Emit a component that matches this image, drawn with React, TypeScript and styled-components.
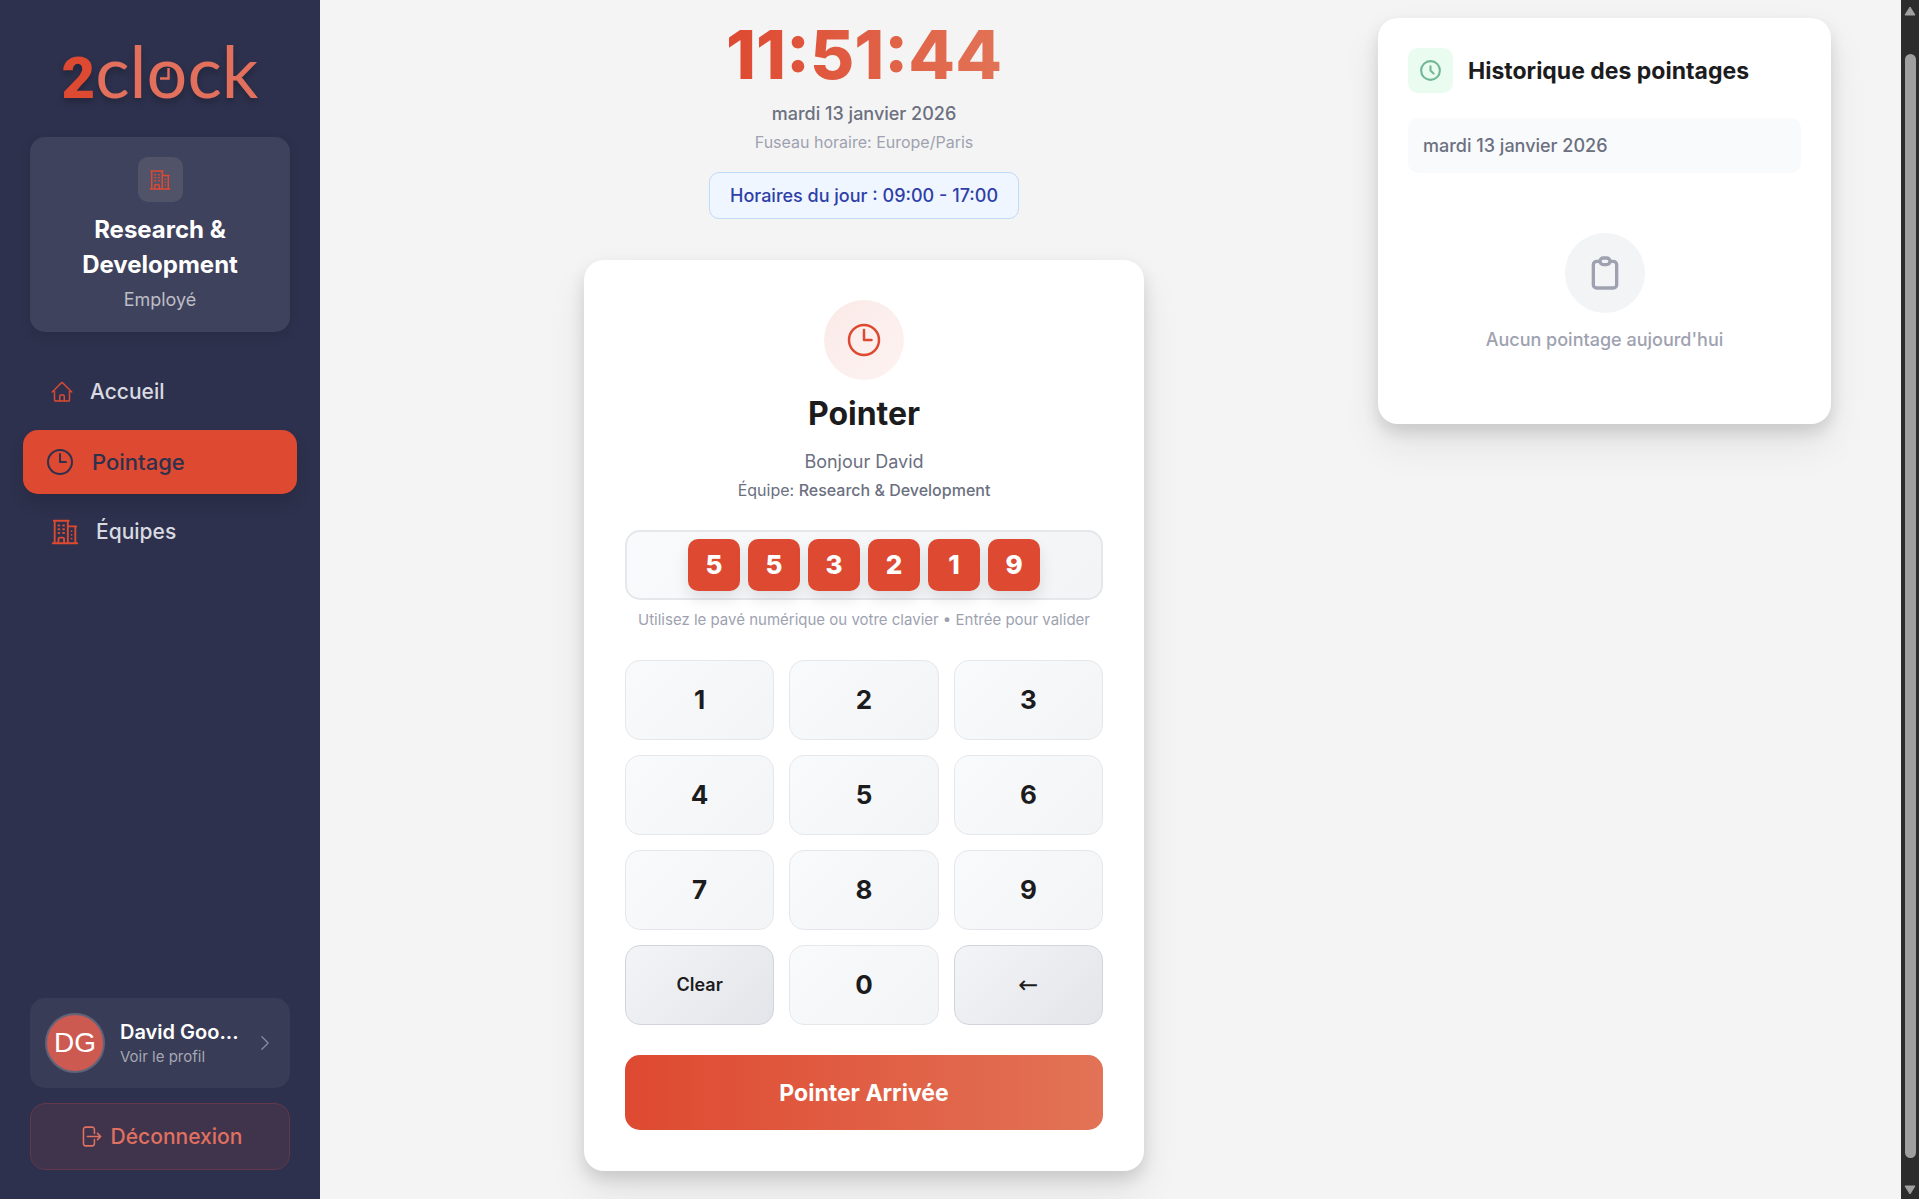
import React, { useEffect, useState } from "react";
import styled, { createGlobalStyle, css } from "styled-components";
import {
  HiOutlineHome,
  HiOutlineClock,
  HiOutlineBuildingOffice2,
  HiOutlineChevronRight,
  HiOutlineArrowRightOnRectangle,
} from "react-icons/hi2";
import { HiOutlineClipboard, HiOutlineClock as HistoryClock } from "react-icons/hi";

const color = {
  navy: "#2d314d",
  accent: "#de4931",
  coral: "#e27356",
  ink: "#1c1c1e",
  slate: "#6b7080",
  muted: "#9ea2b0",
};

const GlobalStyle = createGlobalStyle`
  *, *::before, *::after { box-sizing: border-box; }
  body {
    margin: 0;
    background: #f4f4f4;
    color: ${color.ink};
    font-family: Inter, "Open Sans", sans-serif;
    font-size: 16px;
    line-height: 24px;
  }
  h1, h2, h3, p { margin: 0; }
  button { font: inherit; color: inherit; cursor: pointer; }
  a { text-decoration: none; color: inherit; }
  svg { display: block; flex: none; }
`;

const Shell = styled.div`
  display: grid;
  grid-template-columns: 320px minmax(0, 1fr) 18px;
  height: 100vh;
  overflow: hidden;
`;

/* ---------- sidebar ---------- */

const Sidebar = styled.aside`
  display: flex;
  flex-direction: column;
  padding: 34px 30px 29px;
  background: ${color.navy};
  color: #fff;
`;

const Logo = styled.a`
  display: flex;
  justify-content: center;
  align-items: baseline;
  height: 72px;
  margin-bottom: 31px;
  font-family: Lato, sans-serif;
  font-size: 72px;
  font-weight: 400;
  line-height: 72px;
  color: #e3705c;
  text-shadow: 0 4px 6px rgba(0, 0, 0, 0.25);
`;

const LogoDigit = styled.span`
  font-family: Roboto, sans-serif;
  font-size: 58px;
  font-weight: 900;
  color: ${color.accent};
`;

const LogoDial = styled.span`
  position: relative;
`;

const LogoHands = styled.svg`
  position: absolute;
  left: 50%;
  bottom: 26px;
  margin-left: -7px;
`;

const TeamCard = styled.section`
  display: flex;
  flex-direction: column;
  align-items: center;
  padding: 20px 20px 19px;
  border-radius: 15px;
  background: #3f425c;
  box-shadow: 0 4px 12px rgba(0, 0, 0, 0.1);
  text-align: center;
`;

const TeamBadge = styled.span`
  display: grid;
  place-items: center;
  width: 45px;
  height: 45px;
  margin-bottom: 10px;
  border-radius: 10px;
  background: #515369;
  color: ${color.accent};
`;

const TeamName = styled.h2`
  font-size: 24px;
  font-weight: 700;
  line-height: 35px;
`;

const TeamRole = styled.p`
  margin-top: 4px;
  font-size: 18px;
  line-height: 27px;
  color: #bcbdc6;
`;

const Nav = styled.nav`
  display: flex;
  flex-direction: column;
  gap: 6px;
  margin: 28px -7px 0;
`;

const NavLink = styled.a<{ $active?: boolean }>`
  display: flex;
  align-items: center;
  gap: 16px;
  height: 64px;
  padding: 0 27px;
  border-radius: 15px;
  font-size: 21px;
  font-weight: 500;
  color: #d9dae1;

  svg { color: ${color.accent}; }

  ${({ $active }) =>
    $active &&
    css`
      padding: 0 21px;
      font-size: 22px;
      background: ${color.accent};
      color: ${color.navy};
      box-shadow: 0 10px 15px rgba(0, 0, 0, 0.12);
      svg { color: ${color.navy}; }
    `}
`;

const Account = styled.div`
  display: flex;
  flex-direction: column;
  gap: 15px;
  margin-top: auto;
`;

const Profile = styled.a`
  display: flex;
  align-items: center;
  gap: 15px;
  height: 90px;
  padding: 15px;
  border-radius: 15px;
  background: #383c56;
  > svg { color: #8a8c9c; }
`;

const Avatar = styled.span`
  display: grid;
  place-items: center;
  flex: none;
  width: 60px;
  height: 60px;
  border: 2px solid #60637a;
  border-radius: 50%;
  background: #cd5a50;
  font-family: "Liberation Sans", Arial, sans-serif;
  font-size: 28px;
`;

const ProfileText = styled.span`
  flex: 1;
  min-width: 0;
`;

const ProfileName = styled.span`
  display: block;
  white-space: nowrap;
  font-size: 20px;
  font-weight: 600;
  line-height: 28px;
`;

const ProfileHint = styled.span`
  display: block;
  font-size: 15px;
  line-height: 22px;
  color: #a5a7b3;
`;

const Logout = styled.button`
  display: flex;
  align-items: center;
  justify-content: center;
  gap: 8px;
  height: 67px;
  border: 1px solid #63384c;
  border-radius: 15px;
  background: #40334c;
  color: #e0705f;
  font-size: 21px;
  font-weight: 500;
`;

/* ---------- main ---------- */

const Main = styled.main`
  display: grid;
  grid-template-columns: minmax(0, 1fr) 453px;
  align-items: start;
  padding: 18px 70px 0 30px;
  overflow: hidden;
`;

const Center = styled.div`
  display: flex;
  flex-direction: column;
  align-items: center;
`;

const Time = styled.h1`
  font-size: 68px;
  font-weight: 800;
  line-height: 72px;
  background: linear-gradient(90deg, ${color.accent}, ${color.coral});
  background-clip: text;
  -webkit-background-clip: text;
  color: transparent;
`;

const Today = styled.p`
  margin-top: 12px;
  font-size: 18px;
  font-weight: 500;
  color: ${color.slate};
`;

const Zone = styled.p`
  margin-top: 4px;
  font-size: 16px;
  color: ${color.muted};
`;

const Schedule = styled.p`
  margin-top: 18px;
  padding: 11px 20px;
  border: 1px solid #c0dbf8;
  border-radius: 10px;
  background: #eff6ff;
  color: #2f3fa8;
  font-size: 18px;
  font-weight: 500;
  line-height: 23px;
`;

const Panel = styled.section`
  border-radius: 20px;
  background: #fff;
  box-shadow: 0 20px 40px rgba(0, 0, 0, 0.08), 0 8px 16px rgba(0, 0, 0, 0.12);
`;

const PunchCard = styled(Panel)`
  display: flex;
  flex-direction: column;
  align-items: center;
  width: 560px;
  max-width: 100%;
  margin-top: 41px;
  padding: 40px 41px 41px;
`;

const Disc = styled.span<{ $tone: "accent" | "grey" }>`
  display: grid;
  place-items: center;
  width: 80px;
  height: 80px;
  border-radius: 50%;
  color: ${({ $tone }) => ($tone === "accent" ? color.accent : color.muted)};
  background: ${({ $tone }) =>
    $tone === "accent" ? "linear-gradient(135deg, #faeae8, #fdf3f1)" : "#f3f4f6"};
`;

const PunchTitle = styled.h2`
  margin-top: 14px;
  font-size: 32px;
  font-weight: 700;
  line-height: 40px;
`;

const Greeting = styled.p`
  margin-top: 16px;
  font-size: 18px;
  color: ${color.slate};
`;

const TeamLine = styled.p`
  margin-top: 4px;
  font-size: 16px;
  color: ${color.slate};
  strong { font-weight: 500; }
`;

const PunchForm = styled.form`
  display: flex;
  flex-direction: column;
  align-self: stretch;
  margin-top: 28px;
`;

const Code = styled.output`
  display: flex;
  align-items: center;
  justify-content: center;
  gap: 8px;
  height: 70px;
  border: 2px solid #e5e7eb;
  border-radius: 15px;
  background: linear-gradient(135deg, #f9fafb, #f3f4f6);
`;

const CodeDigit = styled.span`
  display: grid;
  place-items: center;
  width: 52px;
  height: 52px;
  border-radius: 10px;
  background: ${color.accent};
  box-shadow: 0 8px 15px rgba(0, 0, 0, 0.1);
  color: #fff;
  font-size: 26px;
  font-weight: 800;
`;

const Hint = styled.p`
  align-self: center;
  margin-top: 8px;
  font-size: 15px;
  white-space: nowrap;
  color: ${color.muted};
`;

const Keypad = styled.div`
  display: grid;
  grid-template-columns: repeat(3, 1fr);
  gap: 15px;
  margin: 28px 0 30px;
`;

const Key = styled.button<{ $action?: boolean }>`
  height: 80px;
  padding: 0;
  border: 1px solid ${({ $action }) => ($action ? "#d1d4dc" : "#e5e7eb")};
  border-radius: 15px;
  background: ${({ $action }) =>
    $action
      ? "linear-gradient(135deg, #f3f4f6, #e4e5ea)"
      : "linear-gradient(135deg, #f9fafc, #f3f4f6)"};
  font-size: ${({ $action }) => ($action ? "18px" : "26px")};
  font-weight: ${({ $action }) => ($action ? 600 : 700)};
`;

const ArrowKey = styled(Key)`
  font-family: "DejaVu Sans", sans-serif;
  font-size: 24px;
  font-weight: 400;
`;

const Submit = styled.button`
  height: 75px;
  border: 0;
  border-radius: 15px;
  background: linear-gradient(90deg, ${color.accent}, ${color.coral});
  color: #fff;
  font-size: 23px;
  font-weight: 700;
`;

/* ---------- history ---------- */

const History = styled(Panel)`
  padding: 30px;
`;

const HistoryHead = styled.header`
  display: flex;
  align-items: center;
  gap: 15px;
`;

const HistoryBadge = styled.span`
  display: grid;
  place-items: center;
  width: 45px;
  height: 45px;
  border-radius: 10px;
  background: #eafbef;
  color: #6fb795;
`;

const HistoryTitle = styled.h2`
  font-size: 23px;
  font-weight: 700;
  line-height: 30px;
`;

const HistoryDate = styled.p`
  margin-top: 25px;
  padding: 15px;
  border-radius: 10px;
  background: #f9fafc;
  font-size: 18px;
  font-weight: 500;
  line-height: 25px;
  color: ${color.slate};
`;

const Empty = styled.div`
  display: flex;
  flex-direction: column;
  align-items: center;
  gap: 15px;
  padding: 60px 0 42px;
  font-size: 18px;
  font-weight: 500;
  color: ${color.muted};
`;

/* ---------- scroll rail ---------- */

const Rail = styled.div`
  display: flex;
  flex-direction: column;
  align-items: center;
  padding: 6px 0 4px;
  background: #2c2c2c;
  color: #9f9f9f;
`;

const Thumb = styled.div`
  flex: 1;
  width: 11px;
  margin: 38px 0 27px;
  border-radius: 6px;
  background: #9f9f9f;
`;

const KEYS = ["1", "2", "3", "4", "5", "6", "7", "8", "9", "Clear", "0", "←"];

export default function App() {
  const [code, setCode] = useState("553219");

  const press = (key: string) => {
    if (key === "Clear") setCode("");
    else if (key === "←") setCode((c) => c.slice(0, -1));
    else setCode((c) => (c.length < 6 ? c + key : c));
  };

  useEffect(() => {
    const onKey = (e: KeyboardEvent) => {
      if (/^\d$/.test(e.key)) press(e.key);
      if (e.key === "Backspace") press("←");
    };
    window.addEventListener("keydown", onKey);
    return () => window.removeEventListener("keydown", onKey);
  }, []);

  return (
    <>
      <GlobalStyle />
      <Shell>
        <Sidebar>
          <Logo href="#">
            <LogoDigit>2</LogoDigit>cl
            <LogoDial>
              o
              <LogoHands width="10" height="12" viewBox="0 0 10 12" aria-hidden="true">
                <path d="M8.5 0v10.5H0" fill="none" stroke="#e3705c" strokeWidth="2.4" />
              </LogoHands>
            </LogoDial>
            ck
          </Logo>

          <TeamCard>
            <TeamBadge>
              <HiOutlineBuildingOffice2 size={24} />
            </TeamBadge>
            <TeamName>Research &amp; Development</TeamName>
            <TeamRole>Employé</TeamRole>
          </TeamCard>

          <Nav>
            <NavLink href="#accueil">
              <HiOutlineHome size={24} />
              Accueil
            </NavLink>
            <NavLink href="#pointage" $active aria-current="page">
              <HiOutlineClock size={32} />
              Pointage
            </NavLink>
            <NavLink href="#equipes">
              <HiOutlineBuildingOffice2 size={30} />
              Équipes
            </NavLink>
          </Nav>

          <Account>
            <Profile href="#profil">
              <Avatar>DG</Avatar>
              <ProfileText>
                <ProfileName>David Goo...</ProfileName>
                <ProfileHint>Voir le profil</ProfileHint>
              </ProfileText>
              <HiOutlineChevronRight size={20} />
            </Profile>
            <Logout type="button">
              <HiOutlineArrowRightOnRectangle size={25} />
              Déconnexion
            </Logout>
          </Account>
        </Sidebar>

        <Main>
          <Center>
            <Time>11:51:44</Time>
            <Today>mardi 13 janvier 2026</Today>
            <Zone>Fuseau horaire: Europe/Paris</Zone>
            <Schedule>Horaires du jour : 09:00 - 17:00</Schedule>

            <PunchCard>
              <Disc $tone="accent">
                <HiOutlineClock size={40} />
              </Disc>
              <PunchTitle>Pointer</PunchTitle>
              <Greeting>Bonjour David</Greeting>
              <TeamLine>
                Équipe: <strong>Research &amp; Development</strong>
              </TeamLine>
              <PunchForm onSubmit={(e) => e.preventDefault()}>
                <Code aria-label="Code">
                  {code.split("").map((digit, i) => (
                    <CodeDigit key={i}>{digit}</CodeDigit>
                  ))}
                </Code>
                <Hint>Utilisez le pavé numérique ou votre clavier • Entrée pour valider</Hint>
                <Keypad>
                  {KEYS.map((key) =>
                    key === "←" ? (
                      <ArrowKey key={key} type="button" $action onClick={() => press(key)}>
                        {key}
                      </ArrowKey>
                    ) : (
                      <Key
                        key={key}
                        type="button"
                        $action={key === "Clear"}
                        onClick={() => press(key)}
                      >
                        {key}
                      </Key>
                    )
                  )}
                </Keypad>
                <Submit type="submit">Pointer Arrivée</Submit>
              </PunchForm>
            </PunchCard>
          </Center>

          <History>
            <HistoryHead>
              <HistoryBadge>
                <HistoryClock size={25} />
              </HistoryBadge>
              <HistoryTitle>Historique des pointages</HistoryTitle>
            </HistoryHead>
            <HistoryDate>mardi 13 janvier 2026</HistoryDate>
            <Empty>
              <Disc $tone="grey">
                <HiOutlineClipboard size={40} />
              </Disc>
              <p>Aucun pointage aujourd'hui</p>
            </Empty>
          </History>
        </Main>

        <Rail aria-hidden="true">
          <svg width="12" height="10" viewBox="0 0 12 10">
            <path d="M6 1 11 9H1Z" fill="currentColor" stroke="currentColor" strokeLinejoin="round" />
          </svg>
          <Thumb />
          <svg width="12" height="10" viewBox="0 0 12 10">
            <path d="M6 9 1 1h10Z" fill="currentColor" stroke="currentColor" strokeLinejoin="round" />
          </svg>
        </Rail>
      </Shell>
    </>
  );
}
